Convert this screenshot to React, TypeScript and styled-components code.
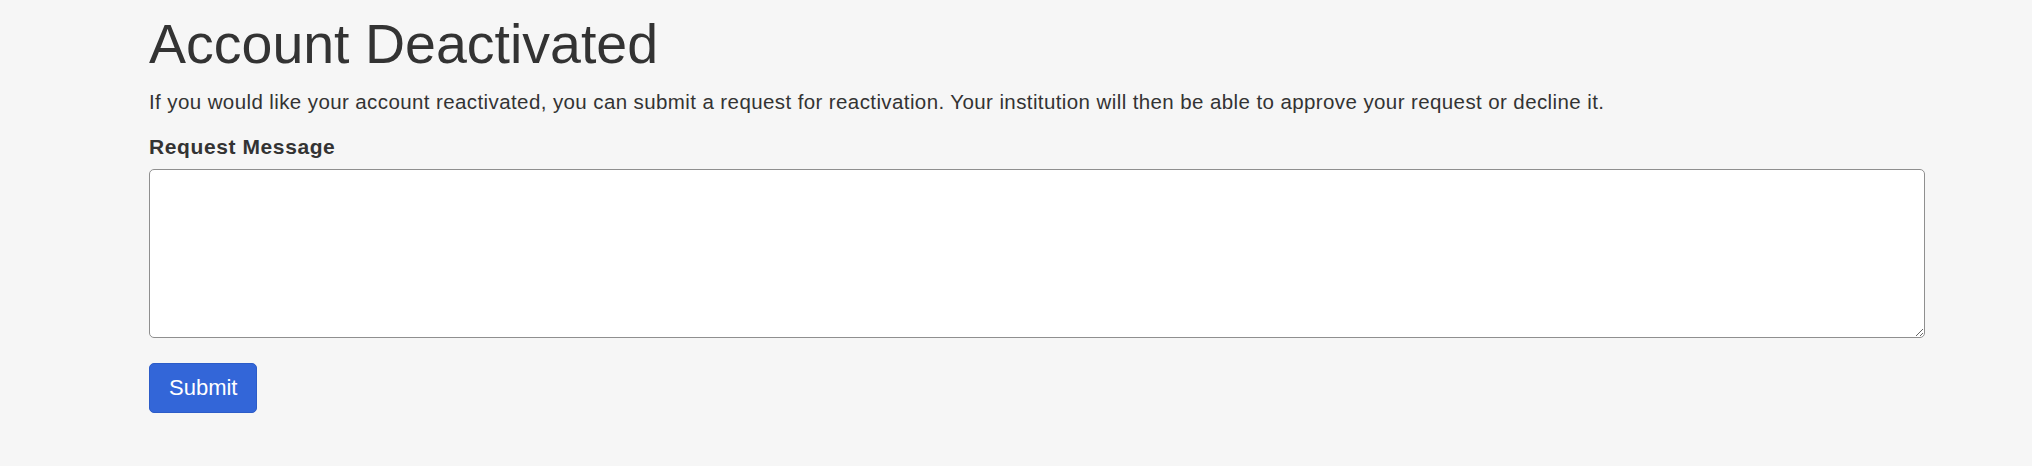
import React from 'react'
import styled, { createGlobalStyle } from 'styled-components';

const GlobalStyles = createGlobalStyle`
    html, body {
        margin: 0;
        padding: 0;
        background-color: #f6f6f6;
    }

    body {
        font-family: "Liberation Sans", Arial, sans-serif;
        color: #333333;
    }
`;

const Page = styled.main`
    display: flex;
    flex-direction: column;
    align-items: flex-start;

    padding: 11px 107px 40px 149px;
`;

const Title = styled.h1`
    margin: 0;
    font-size: 55.5px;
    line-height: 66px;
    font-weight: 400;
    color: #333333;
`;

const Intro = styled.p`
    margin: 10px 0 0 0;
    font-size: 20.5px;
    line-height: 30px;
    letter-spacing: 0.4px;
    color: #333333;
`;

const Form = styled.form`
    display: flex;
    flex-direction: column;
    align-items: flex-start;
    align-self: stretch;

    margin-top: 15px;
`;

const Label = styled.label`
    font-size: 21px;
    line-height: 30px;
    font-weight: 700;
    letter-spacing: 0.6px;
    color: #333333;
`;

const MessageBox = styled.textarea`
    box-sizing: border-box;
    width: 100%;
    height: 169px;
    margin-top: 7px;
    padding: 8px 12px;

    font-family: inherit;
    font-size: 20px;
    background-color: #ffffff;
    border: 1px solid #8f8f8f;
    border-radius: 5px;
    outline: none;
`;

const SubmitButton = styled.button`
    box-sizing: border-box;
    height: 50px;
    margin-top: 25px;
    padding: 0 19px;

    font-family: inherit;
    font-size: 22px;
    color: #ffffff;
    background-color: #3366d8;
    border: 1px solid #2c5cc8;
    border-radius: 5px;
    cursor: pointer;
`;

function App() {
    return (
        <>
            <GlobalStyles />
            <Page>
                <Title>Account Deactivated</Title>
                <Intro>
                    If you would like your account reactivated, you can submit a request for reactivation. Your institution will then be able to approve your request or decline it.
                </Intro>
                <Form onSubmit={e => e.preventDefault()}>
                    <Label htmlFor="request-message">Request Message</Label>
                    <MessageBox id="request-message" />
                    <SubmitButton type="submit">Submit</SubmitButton>
                </Form>
            </Page>
        </>
    )
}

export default App;
